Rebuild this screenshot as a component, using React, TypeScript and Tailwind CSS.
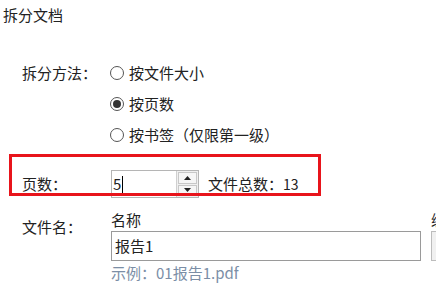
import React from "react";

const font = { fontFamily: '"Microsoft YaHei", "Noto Sans CJK SC", "Noto Sans", sans-serif' };

function Radio({ label, checked }: { label: string; checked?: boolean }) {
  return (
    <div className="flex h-[31px] items-center gap-[5px]">
      <span className="grid h-[14px] w-[14px] place-items-center rounded-full border border-[#555] bg-white">
        {checked ? <span className="h-[8px] w-[8px] rounded-full bg-[#333]" /> : null}
      </span>
      <span>{label}</span>
    </div>
  );
}

export default function App() {
  return (
    <div className="relative h-[294px] w-[436px] overflow-hidden bg-white text-[15px] leading-[20px] text-[#222]" style={font}>
      <div className="pl-[3px] pt-[5px]">拆分文档</div>

      <div className="mt-[32px] flex pl-[22px]">
        <div className="flex h-[31px] w-[88px] items-center">拆分方法：</div>
        <div className="flex flex-col">
          <Radio label="按文件大小" />
          <Radio label="按页数" checked />
          <Radio label="按书签（仅限第一级）" />
        </div>
      </div>

      <div className="relative mt-[20px] flex h-[28px] items-center pl-[22px]">
        <div className="absolute left-[9px] top-[-16px] h-[42px] w-[312px] border-[3px] border-[#e8141b]" />
        <div className="w-[89px]">页数：</div>
        <div className="flex h-[28px] w-[88px] border border-[#b5b5b5] bg-white">
          <div className="flex flex-1 items-center pl-[1px] text-[15px]">
            5<span className="ml-[1px] h-[17px] w-[1px] bg-black" />
          </div>
          <div className="flex w-[22px] flex-col gap-[1px] border-l border-[#d0d0d0] bg-[#f0f0f0] p-[1px]">
            <div className="grid flex-1 place-items-center border border-[#c8c8c8] bg-[#f6f6f6]">
              <svg width="7" height="4" viewBox="0 0 7 4"><path d="M0 4 L3.5 0 L7 4Z" fill="#222" /></svg>
            </div>
            <div className="grid flex-1 place-items-center border border-[#c8c8c8] bg-[#f6f6f6]">
              <svg width="7" height="4" viewBox="0 0 7 4"><path d="M0 0 L3.5 4 L7 0Z" fill="#222" /></svg>
            </div>
          </div>
        </div>
        <div className="ml-[9px]">
          文件总数：<span className="text-[14px]">13</span>
        </div>
      </div>

      <div className="mt-[12px] flex pl-[22px]">
        <div className="w-[89px] shrink-0 pt-[7px]">文件名：</div>
        <div className="flex shrink-0 flex-col">
          <div className="h-[20px]">名称</div>
          <div className="mt-[1px] flex h-[30px] w-[310px] items-center border border-[#9a9a9a] px-[3px]">报告1</div>
          <div className="mt-[2px] text-[#7b8ea6]">示例：01报告1.pdf</div>
        </div>
        <div className="ml-[10px] flex shrink-0 flex-col">
          <div className="h-[20px] overflow-hidden">编</div>
          <div className="mt-[1px] h-[30px] w-[20px] border border-[#bcbcbc] bg-[#f0f0f0]" />
        </div>
      </div>
    </div>
  );
}
